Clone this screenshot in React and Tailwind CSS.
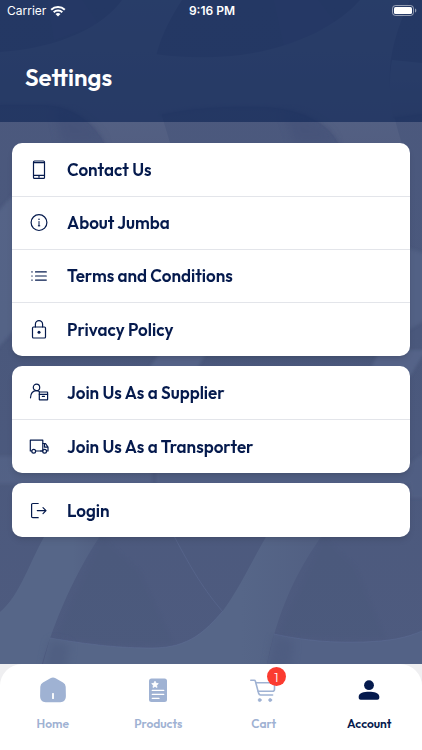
import React from 'react';

const stroke = { fill: 'none', stroke: 'currentColor', strokeWidth: 1.2, strokeLinecap: 'round', strokeLinejoin: 'round' };

function Icon({ children }) {
  return (
    <svg viewBox="0 0 24 24" className="h-6 w-6 shrink-0" aria-hidden="true" {...stroke}>
      {children}
    </svg>
  );
}

const PhoneIcon = () => (
  <Icon>
    <rect x="6.5" y="3" width="11" height="17.4" rx="1" />
    <path d="M6.500 4.600h11M6.500 17.300h11" />
    <path d="M11.600 18.900h.8" />
  </Icon>
);

const InfoIcon = () => (
  <Icon>
    <circle cx="12" cy="11.600" r="7.900" />
    <path d="M12 10.500v4.300M11.300 14.800h1.500" strokeWidth="1" />
    <circle cx="12" cy="8.300" r="0.800" fill="currentColor" stroke="none" />
  </Icon>
);

const ListIcon = () => (
  <Icon>
    <path d="M8.500 7.900h10.800M8.500 12h10.800M8.500 16.100h10.800" />
    <path d="M4.800 7.900h.4M4.800 12h.4M4.800 16.100h.4" />
  </Icon>
);

const LockIcon = () => (
  <Icon>
    <rect x="5.500" y="9" width="13" height="11" rx="1" />
    <path d="M8.400 9V6.200a3.600 3.600 0 0 1 7.200 0V9" />
    <circle cx="12" cy="14.300" r="1.500" fill="currentColor" stroke="none" />
  </Icon>
);

const SupplierIcon = () => (
  <Icon>
    <circle cx="9.500" cy="6.400" r="3.200" />
    <path d="M3.500 16.800c.2-4.300 2.500-7.200 6-7.200 1.200 0 2 .3 2.800.9" />
    <rect x="12.300" y="11" width="8.300" height="7.800" rx="0.400" />
    <path d="M12.300 13.300h8.300M15.300 15.300h2.200" />
  </Icon>
);

const TruckIcon = () => (
  <Icon>
    <path d="M4.700 16H3.300V5.200h12.500V16H8.700" />
    <path d="M15.800 8.500h2.700l2.500 3.600V16h-1.500M13.500 16h2M17.500 8.700v3.400H21" />
    <circle cx="6.700" cy="16.200" r="1.900" />
    <circle cx="17.600" cy="16.200" r="1.900" />
  </Icon>
);

const LoginIcon = () => (
  <Icon>
    <path d="M11.200 4.500H5.800c-.8 0-1.200.4-1.200 1.200v11.800c0 .8.4 1.200 1.200 1.200h5.400" />
    <path d="M10.300 11.600h8.600M16 8.600l3 3-3 3" />
  </Icon>
);

const groups = [
  [
    { label: 'Contact Us', icon: PhoneIcon },
    { label: 'About Jumba', icon: InfoIcon },
    { label: 'Terms and Conditions', icon: ListIcon },
    { label: 'Privacy Policy', icon: LockIcon },
  ],
  [
    { label: 'Join Us As a Supplier', icon: SupplierIcon },
    { label: 'Join Us As a Transporter', icon: TruckIcon },
  ],
  [{ label: 'Login', icon: LoginIcon }],
];

const HomeTab = () => (
  <svg viewBox="0 0 28 28" className="h-7 w-7" fill="currentColor" aria-hidden="true">
    <path d="M11.400 2.300a5 5 0 0 1 5.200 0l7.400 4.300a5 5 0 0 1 2.700 4.200l.2 9c0 4-2 6.400-5.700 6.400H6.800c-3.700 0-5.700-2.400-5.700-6.400l.2-9A5 5 0 0 1 4 6.600z" />
    <rect x="13.100" y="17" width="1.800" height="6" rx="0.600" fill="#fff" />
  </svg>
);

const ProductsTab = () => (
  <svg viewBox="0 0 28 28" className="h-7 w-7" fill="currentColor" aria-hidden="true">
    <rect x="5" y="2.500" width="18" height="23.500" rx="2.500" />
    <path
      d="M11 5.200l1 2.100 2.300.3-1.700 1.600.4 2.300-2-1.100-2 1.100.4-2.300-1.700-1.600 2.300-.3z"
      fill="#fff" stroke="#fff" strokeWidth="0.800" strokeLinejoin="round"
    />
    <path d="M8.300 14.400h11.400M8.300 18.400h11.400M8.300 22.400h6.700" stroke="#fff" strokeWidth="1.300" strokeLinecap="round" />
  </svg>
);

const CartTab = () => (
  <svg viewBox="0 0 28 28" className="h-7 w-7" fill="none" stroke="currentColor" strokeWidth="1.600" strokeLinecap="round" strokeLinejoin="round" aria-hidden="true">
    <path d="M.8 4.300h3.500c.6 0 .9.300 1.100.9l3.300 12.400c.3 1 .8 1.400 1.800 1.400h12.100" />
    <path d="M6.200 6.800h18.300v6.400c0 1.400-.6 2-2 2H8.200" />
    <circle cx="9.700" cy="24" r="1.500" fill="currentColor" strokeWidth="0.800" />
    <circle cx="20.200" cy="24" r="1.500" fill="currentColor" strokeWidth="0.800" />
  </svg>
);

const AccountTab = () => (
  <svg viewBox="0 0 28 28" className="h-7 w-7" fill="currentColor" aria-hidden="true">
    <circle cx="14" cy="9.200" r="4.900" />
    <path d="M3.700 20.600c0-3.700 5.200-4.900 10.300-4.900s10.300 1.200 10.300 4.900v1.200c0 1.200-.8 2-2 2H5.700c-1.200 0-2-.8-2-2z" />
  </svg>
);

const tabs = [
  { label: 'Home', icon: HomeTab },
  { label: 'Products', icon: ProductsTab },
  { label: 'Cart', icon: CartTab, badge: 1 },
  { label: 'Account', icon: AccountTab, active: true },
];

// woven ribbons behind the whole screen
function Backdrop() {
  return (
    <svg
      viewBox="0 0 422 664"
      preserveAspectRatio="xMidYMid slice"
      className="absolute inset-0 h-full w-full"
      aria-hidden="true"
    >
      <defs>
        <linearGradient id="band" x1="0" y1="0" x2="0" y2="1">
          <stop offset="0" stopColor="#58678a" />
          <stop offset="1" stopColor="#525e81" />
        </linearGradient>
        <linearGradient id="arm" x1="0" y1="0" x2="1" y2="0">
          <stop offset="0" stopColor="#566688" />
          <stop offset="0.7" stopColor="#566688" />
          <stop offset="1" stopColor="#515f82" />
        </linearGradient>
        <linearGradient id="base" x1="0" y1="0" x2="0" y2="1">
          <stop offset="0" stopColor="#4c597e" />
          <stop offset="0.5" stopColor="#4a587c" />
          <stop offset="1" stopColor="#4e5b7f" />
        </linearGradient>
        <filter id="soft"><feGaussianBlur stdDeviation="1.500" /></filter>
        <filter id="softer"><feGaussianBlur stdDeviation="4" /></filter>
      </defs>
      <rect width="422" height="664" fill="url(#base)" />

      <g fill="url(#band)">
        <path d="M0 52C60 48 104 26 122 0H182C160 34 150 62 156 92C160 112 166 128 172 150H108C96 124 74 106 44 105H0Z" />
        <path d="M155 54C196 60 244 58 282 46C320 34 344 18 360 0H410C394 34 386 66 391 98C394 118 398 132 404 150H342C330 122 300 108 262 107C226 106 190 108 160 115C152 92 151 72 155 54Z" />
        <path d="M392 60L422 63V114L393 118C389 96 389 78 392 60Z" />
      </g>
      <g fill="none" stroke="#435076" strokeWidth="1.500" opacity="0.700" filter="url(#soft)">
        <path d="M0 105H44C74 106 96 124 108 150" />
        <path d="M160 115C190 108 226 106 262 107C300 108 330 122 342 150" />
        <path d="M393 118L422 114" />
      </g>
      <g fill="#56648a" opacity="0.250">
        <path d="M48 0L54 40L98 24L82 0Z" />
        <path d="M274 0L284 46L336 24L318 0Z" />
      </g>
      <g fill="#435077" opacity="0.500" filter="url(#softer)">
        <path d="M54 108C76 112 94 124 104 143H62Z" />
        <path d="M284 112C306 114 326 124 336 143H294Z" />
      </g>

      <g fill="#5a698d" filter="url(#soft)">
        <path d="M-4 214L14 194V330L-4 350Z" opacity="0.600" />
        <path d="M408 248L426 254V320L408 330Z" opacity="0.500" />
        <path d="M148 370L162 350H208L196 370Z" opacity="0.700" />
        <path d="M370 370L380 350H426L410 376Z" opacity="0.700" />
        <path d="M-4 456H14L152 470V484H-4Z" opacity="0.500" />
        <path d="M156 470H400L426 452V498H410V484H156Z" opacity="0.400" />
      </g>

      <path d="M0 612C20 596 30 560 48 530H104C82 562 58 608 42 664H0Z" fill="url(#arm)" />
      <path d="M50 638C92 645 120 648 152 648C190 648 206 630 222 612C240 588 252 560 270 530H326C304 560 280 600 267 664H43Z" fill="url(#arm)" />
      <path d="M274 634C306 641 334 643 364 642C390 641 406 638 422 631V664H267Z" fill="#536286" />
      <g fill="none" stroke="#62719a" strokeWidth="1" opacity="0.400">
        <path d="M50 638C92 645 120 648 152 648C190 648 206 630 222 612" />
        <path d="M274 634C306 641 334 643 364 642C390 641 406 638 422 631" />
        <path d="M174 536C192 570 204 590 223 612" />
      </g>
      <g fill="#48587a" opacity="0.300" filter="url(#soft)">
        <path d="M102 536L140 570L174 643C130 646 90 643 56 636Z" />
        <path d="M324 536L356 566L386 638C346 641 310 638 279 632Z" />
      </g>
      <g fill="#465479" opacity="0.400" filter="url(#softer)">
        <path d="M50 640L70 644L66 670H44Z" />
        <path d="M274 636L294 640L290 670H268Z" />
      </g>
    </svg>
  );
}

function StatusBar() {
  return (
    <div className="grid h-[22px] grid-cols-3 items-center pr-[5px] pl-[7px] font-[Inter,sans-serif] text-[12px] text-white">
      <div className="flex items-center gap-1">
        <span>Carrier</span>
        <svg viewBox="0 0 16 12" className="h-3 w-4" fill="none" stroke="currentColor" strokeWidth="2" aria-hidden="true">
          <path d="M1.200 4.700a9.700 9.700 0 0 1 13.600 0M3.700 7.300a6.100 6.100 0 0 1 8.600 0" />
          <path d="M8 11.600L5.500 9.100a3.600 3.600 0 0 1 5 0z" fill="currentColor" stroke="none" />
        </svg>
      </div>
      <span className="text-center font-semibold">9:16 PM</span>
      <svg viewBox="0 0 26 12" className="h-3 w-[26px] justify-self-end" aria-hidden="true">
        <rect x="1.500" y="0.500" width="21" height="10" rx="3" fill="none" stroke="#fff" strokeOpacity="0.500" />
        <rect x="3" y="2" width="18" height="7" rx="1.500" fill="#fff" />
        <path d="M24 3.500v4c.9-.3 1.300-1.100 1.300-2s-.4-1.700-1.300-2z" fill="#fff" fillOpacity="0.500" />
      </svg>
    </div>
  );
}

function SettingsGroup({ items }) {
  return (
    <ul className="divide-y divide-[#e3e5ea] overflow-hidden rounded-[10px] bg-white pt-px shadow-md">
      {items.map(({ label, icon: RowIcon }) => (
        <li key={label} className="h-[53px]">
          <button type="button" className="flex h-full w-full items-center gap-4 px-[15px] text-left text-[#051a4d]">
            <RowIcon />
            <span className="text-[17px] leading-6 font-semibold">{label}</span>
          </button>
        </li>
      ))}
    </ul>
  );
}

function TabBar() {
  return (
    <div className="bg-[#efeff1]">
      <nav className="grid h-[86px] grid-cols-4 rounded-t-[22px] bg-white">
        {tabs.map(({ label, icon: TabIcon, badge, active }) => (
          <a
            key={label}
            href={`#${label.toLowerCase()}`}
            aria-current={active ? 'page' : undefined}
            className={`flex flex-col items-center gap-3 pt-3 text-[12px] leading-4 font-semibold ${active ? 'text-[#051a4d]' : 'text-[#9fb2d3]'}`}
          >
            <span className="relative">
              <TabIcon />
              {badge && (
                <span className="absolute -top-[9px] left-[17px] flex h-[19px] w-[19px] items-center justify-center rounded-full bg-[#fb3b30] text-[13px] font-light text-white">
                  {badge}
                </span>
              )}
            </span>
            {label}
          </a>
        ))}
      </nav>
    </div>
  );
}

export default function App() {
  return (
    <div className="flex min-h-screen flex-col font-[Outfit,Lato,sans-serif]">
      <div className="relative flex flex-1 flex-col">
        <Backdrop />
        <header className="relative h-[122px] bg-[#0f2656]/65">
          <StatusBar />
          <h1 className="px-[25px] pt-[39px] text-[24px] leading-8 font-semibold text-white">Settings</h1>
        </header>
        <main className="relative flex flex-col gap-[10px] px-3 pt-[21px] pb-8">
          {groups.map((items) => (
            <SettingsGroup key={items[0].label} items={items} />
          ))}
        </main>
      </div>
      <TabBar />
    </div>
  );
}
